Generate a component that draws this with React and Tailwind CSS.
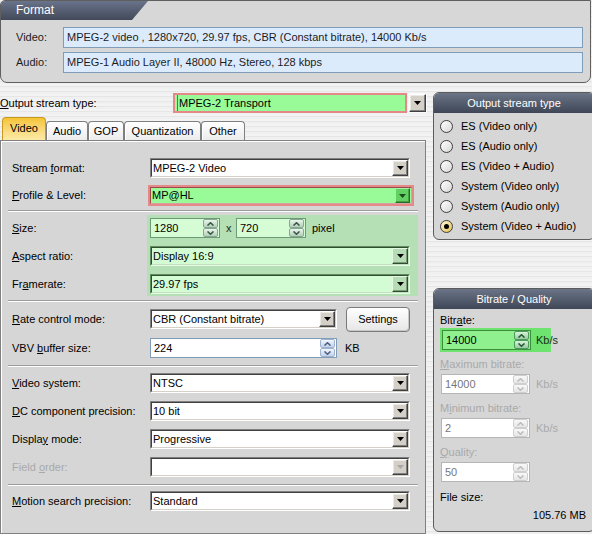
import React from 'react';

const Arrow = ({ color = '#000' }) => (
  <svg width="7" height="4" viewBox="0 0 7 4"><path d="M0 0H7L3.5 4Z" fill={color} /></svg>
);

const DROP = {
  gray: 'bg-[#d4d0c8] border-t-[#ffffff] border-l-[#ffffff] border-r-[#404040] border-b-[#404040] shadow-[inset_-1px_-1px_0_#808080,inset_1px_1px_0_#ebe9e4]',
  green: 'bg-[#b6dcb6] border-t-[#e4f8e4] border-l-[#e4f8e4] border-r-[#2f4f2f] border-b-[#2f4f2f] shadow-[inset_-1px_-1px_0_#7a9a7a]',
  lime: 'bg-[#62d062] border-t-[#a8f0a8] border-l-[#a8f0a8] border-r-[#2a6a2a] border-b-[#2a6a2a] shadow-[inset_-1px_-1px_0_#45a045]',
};

function DropBtn({ tone = 'gray', disabled, size = 'w-[16px] h-[16px]' }) {
  return (
    <div className={`${size} shrink-0 border flex items-center justify-center ${DROP[tone]}`}>
      <Arrow color={disabled ? '#a8a8a8' : tone === 'lime' ? '#1d4a1d' : '#000'} />
    </div>
  );
}

function Combo({ value, w = 'w-[260px]', tone = 'white', disabled }) {
  const outer = tone === 'green'
    ? 'border-t-[#5f8a5f] border-l-[#5f8a5f] border-b-[#e6fae6] border-r-[#e6fae6]'
    : 'border-t-[#808080] border-l-[#808080] border-b-[#ffffff] border-r-[#ffffff]';
  const inner = tone === 'green'
    ? 'border-t-[#2f4f2f] border-l-[#2f4f2f] border-b-[#c0e0c0] border-r-[#c0e0c0] bg-[#d4fcd4]'
    : 'border-t-[#404040] border-l-[#404040] border-b-[#d4d0c8] border-r-[#d4d0c8] bg-white';
  return (
    <div className={`${w} h-[20px] border shrink-0 ${outer}`}>
      <div className={`h-full border flex items-center ${inner}`}>
        <span className="flex-1 pl-[1px] whitespace-nowrap overflow-hidden">{value}</span>
        <DropBtn tone={tone === 'green' ? 'green' : 'gray'} disabled={disabled} />
      </div>
    </div>
  );
}

const SPIN_B = {
  blue: 'border-[#9fb2cf] from-[#f3f6fc] to-[#c3d1ea]',
  green: 'border-[#86a890] from-[#eaf6ec] to-[#b4cfba]',
  lime: 'border-[#4c9a5c] from-[#d8f4dc] to-[#98c8a0]',
  disabled: 'border-[#cfcfcf] from-[#f8f8f8] to-[#e6e6e6]',
};
const SPIN_C = { blue: '#4d6185', green: '#3b5a45', lime: '#2c5a36', disabled: '#bdbdbd' };

function SpinBtns({ tone }) {
  return (
    <div className="flex flex-col mr-[1px]">
      {[0, 1].map((i) => (
        <div key={i} className={`w-[15px] h-[9px] border rounded-[2px] bg-gradient-to-b flex items-center justify-center ${SPIN_B[tone]}`}>
          <svg width="7" height="4" viewBox="0 0 7 4">
            <path d={i === 0 ? 'M0.5 3.6L3.5 0.7L6.5 3.6' : 'M0.5 0.4L3.5 3.3L6.5 0.4'} fill="none" stroke={SPIN_C[tone]} strokeWidth="1.5" />
          </svg>
        </div>
      ))}
    </div>
  );
}

const SPIN_F = {
  blue: 'border-[#7f9db9] bg-white text-black',
  green: 'border-[#6f9a78] bg-[#d6fcd6] text-black',
  lime: 'border-[#3c8c3c] bg-[#8ef08e] text-black',
  disabled: 'border-[#b5b5b5] bg-white text-[#777777]',
};

function SpinField({ w, value, tone = 'blue' }) {
  return (
    <div className={`${w} h-[20px] border flex items-center shrink-0 ${SPIN_F[tone]}`}>
      <span className="flex-1 pl-[3px]">{value}</span>
      <SpinBtns tone={tone} />
    </div>
  );
}

const U = ({ children }) => <span className="underline underline-offset-[1px]">{children}</span>;

function Row({ label, children, className = '', labelCls = '' }) {
  return (
    <div className={`flex items-center h-[20px] ${className}`}>
      <div className={`w-[149px] pl-[11px] shrink-0 ${labelCls}`}>{label}</div>
      {children}
    </div>
  );
}

const Sep = ({ className = '' }) => (
  <div className={`ml-[7px] w-[410px] h-[2px] border-t border-t-[#9c9c9c] border-b border-b-[#ffffff] ${className}`} />
);

function Radio({ checked, label }) {
  return (
    <div className="h-[20px] flex items-center">
      <div className={`w-[13px] h-[13px] rounded-full border border-[#3f3f3f] flex items-center justify-center ${checked ? 'bg-gradient-to-br from-[#fff8d8] to-[#e6bf4c]' : 'bg-gradient-to-br from-[#ffffff] to-[#d8d8d8]'}`}>
        {checked && <div className="w-[5px] h-[5px] rounded-full bg-black" />}
      </div>
      <span className="ml-[8px]">{label}</span>
    </div>
  );
}

const Header = ({ children }) => (
  <div className="h-[20px] rounded-t-[5px] bg-gradient-to-b from-[#6b7587] to-[#3f4757] text-white text-center leading-[20px]">
    {children}
  </div>
);

function Tab({ label, w, selected }) {
  return selected ? (
    <div className={`${w} h-[23px] rounded-t-[4px] border border-b-0 border-[#c99a22] bg-gradient-to-b from-[#f5c431] to-[#fdeaa6] flex items-center justify-center pb-[1px]`}>
      {label}
    </div>
  ) : (
    <div className={`${w} h-[19px] rounded-t-[4px] border border-b-0 border-[#7f7f7f] shadow-[inset_1px_1px_0_#ffffff] bg-gradient-to-b from-[#ffffff] to-[#ececec] flex items-center justify-center`}>
      {label}
    </div>
  );
}

export default function App() {
  return (
    <div className="w-[592px] h-[534px] overflow-hidden text-[11px] leading-[13px] text-black font-['Liberation_Sans',Arial,sans-serif] bg-[#eeeeee] bg-[repeating-linear-gradient(0deg,#f0f0f0_0px,#f0f0f0_2px,#e6e6e6_2px,#e6e6e6_3px,#f3f3f3_3px,#f3f3f3_5px)]">
      {/* Format panel */}
      <div className="w-[591px] h-[83px] rounded-b-[7px] rounded-tl-[5px] border border-[#5f5f5f] bg-[#d7d7d7] overflow-hidden">
        <div className="w-[147px] h-[19px] bg-gradient-to-b from-[#69738a] to-[#424a5a] text-white text-[12px] leading-[19px] pl-[15px] [clip-path:polygon(0_0,100%_0,calc(100%_-_16px)_100%,0_100%)]">
          Format
        </div>
        <div className="mt-[7px] flex items-center pl-[15px] text-[#1c1c1c]">
          <div className="w-[47px]">Video:</div>
          <div className="w-[520px] h-[21px] border border-[#7f9db9] bg-[#dcebfc] pl-[3px] flex items-center">
            MPEG-2 video , 1280x720, 29.97 fps, CBR (Constant bitrate), 14000 Kb/s
          </div>
        </div>
        <div className="mt-[4px] flex items-center pl-[15px] text-[#1c1c1c]">
          <div className="w-[47px]">Audio:</div>
          <div className="w-[520px] h-[21px] border border-[#7f9db9] bg-[#dcebfc] pl-[3px] flex items-center">
            MPEG-1 Audio Layer II, 48000 Hz, Stereo, 128 kbps
          </div>
        </div>
      </div>

      <div className="flex">
        {/* Left column */}
        <div className="w-[427px] shrink-0">
          <div className="mt-[10px] h-[20px] flex items-center">
            <div className="w-[173px]"><U>O</U>utput stream type:</div>
            <div className="w-[254px] h-[20px] flex">
              <div className="flex-1 border-2 border-[#e58888] bg-[#98fb98] flex items-center pl-[2px]">
                <span className="border-l border-[#b05050] h-full flex items-center pl-[1px]">MPEG-2 Transport</span>
              </div>
              <div className="ml-[1px] border border-[#fafafa] flex">
                <DropBtn tone="gray" size="w-[17px] h-[18px]" />
              </div>
            </div>
          </div>

          {/* Tabs */}
          <div className="mt-[4px] flex items-end pl-[2px] h-[23px]">
            <Tab label="Video" w="w-[44px]" selected />
            <Tab label="Audio" w="w-[42px]" />
            <Tab label="GOP" w="w-[36px]" />
            <Tab label="Quantization" w="w-[77px]" />
            <Tab label="Other" w="w-[44px]" />
          </div>

          {/* Tab panel */}
          <div className="w-[426px] h-[394px] border border-[#808080] bg-[#d6d6d6] shadow-[inset_1px_1px_0_#ffffff]">
            <Row label={<>Stream <U>f</U>ormat:</>} className="mt-[17px]">
              <Combo value="MPEG-2 Video" />
            </Row>
            <div className="mt-[7px] flex items-center h-[21px]">
              <div className="w-[147px] pl-[11px] shrink-0"><U>P</U>rofile &amp; Level:</div>
              <div className="w-[266px] h-[21px] border-2 border-[#e58888] flex">
                <div className="flex-1 h-full border border-t-[#9a4a4a] border-l-[#9a4a4a] border-b-[#d8a0a0] border-r-[#d8a0a0] bg-[#98fb98] flex items-center pr-[1px]">
                  <span className="flex-1 pl-[1px]">MP@HL</span>
                  <DropBtn tone="lime" size="w-[15px] h-[15px]" />
                </div>
              </div>
            </div>
            <Sep className="mt-[4px]" />

            {/* Green group */}
            <div className="mt-[3px] flex">
              <div className="w-[146px] shrink-0 pl-[11px] pt-[3px]">
                <div className="h-[20px] flex items-center"><U>S</U>ize:</div>
                <div className="mt-[8px] h-[20px] flex items-center"><U>A</U>spect ratio:</div>
                <div className="mt-[8px] h-[20px] flex items-center">Fr<U>a</U>merate:</div>
              </div>
              <div className="w-[271px] bg-[#b5dfb5] pl-[3px] pt-[3px] pb-[2px]">
                <div className="h-[20px] flex items-center">
                  <SpinField w="w-[70px]" value="1280" tone="green" />
                  <span className="ml-[6px] w-[10px] text-[#1a2a1a]">x</span>
                  <SpinField w="w-[70px]" value="720" tone="green" />
                  <span className="ml-[6px]">pixel</span>
                </div>
                <div className="mt-[8px]"><Combo value="Display 16:9" tone="green" /></div>
                <div className="mt-[8px]"><Combo value="29.97 fps" tone="green" /></div>
              </div>
            </div>
            <Sep className="mt-[4px]" />

            <div className="mt-[4px] flex items-center h-[26px]">
              <div className="w-[149px] pl-[11px] shrink-0"><U>R</U>ate control mode:</div>
              <Combo value="CBR (Constant bitrate)" w="w-[187px]" />
              <div className="ml-[9px] w-[64px] h-[25px] rounded-[4px] border border-[#7a7a7a] bg-gradient-to-b from-[#ffffff] to-[#e6e6e6] shadow-[inset_-1px_-1px_0_#c8c8c8] flex items-center justify-center">
                Settings
              </div>
            </div>
            <Row label={<>VBV <U>b</U>uffer size:</>} className="mt-[6px]">
              <SpinField w="w-[187px]" value="224" tone="blue" />
              <span className="ml-[8px]">KB</span>
            </Row>
            <Sep className="mt-[7px]" />

            <Row label={<><U>V</U>ideo system:</>} className="mt-[6px]">
              <Combo value="NTSC" />
            </Row>
            <Row label={<><U>D</U>C component precision:</>} className="mt-[8px]">
              <Combo value="10 bit" />
            </Row>
            <Row label={<>Displa<U>y</U> mode:</>} className="mt-[8px]">
              <Combo value="Progressive" />
            </Row>
            <Row label={<>Field <U>o</U>rder:</>} className="mt-[8px]" labelCls="text-[#a9a9a9]">
              <Combo value="" disabled />
            </Row>
            <Sep className="mt-[7px]" />
            <Row label={<><U>M</U>otion search precision:</>} className="mt-[5px]">
              <Combo value="Standard" />
            </Row>
          </div>
        </div>

        {/* Right column */}
        <div className="ml-[6px] w-[162px] shrink-0">
          <div className="mt-[9px] h-[148px] rounded-[6px] border border-[#5c5c5c] bg-[#d6d6d6] overflow-hidden">
            <Header>Output stream type</Header>
            <div className="pt-[3px] pl-[6px]">
              <Radio label="ES (Video only)" />
              <Radio label="ES (Audio only)" />
              <Radio label="ES (Video + Audio)" />
              <Radio label="System (Video only)" />
              <Radio label="System (Audio only)" />
              <Radio label="System (Video + Audio)" checked />
            </div>
          </div>

          <div className="mt-[48px] h-[244px] rounded-[6px] border border-[#5c5c5c] bg-[#d6d6d6] overflow-hidden">
            <Header>Bitrate / Quality</Header>
            <div className="pl-[6px]">
              <div className="mt-[5px] h-[13px]">Bitr<U>a</U>te:</div>
              <div className="mt-[1px] w-[111px] h-[24px] bg-[#6fe36f] flex items-center pl-[2px] whitespace-nowrap">
                <SpinField w="w-[89px]" value="14000" tone="lime" />
                <span className="ml-[5px] text-[#143014]">Kb/s</span>
              </div>

              <div className="mt-[6px] h-[13px] text-[#a9a9a9]"><U>M</U>aximum bitrate:</div>
              <div className="mt-[3px] ml-[1px] flex items-center">
                <SpinField w="w-[89px]" value="14000" tone="disabled" />
                <span className="ml-[6px] text-[#a9a9a9]">Kb/s</span>
              </div>

              <div className="mt-[8px] h-[13px] text-[#a9a9a9]">M<U>i</U>nimum bitrate:</div>
              <div className="mt-[3px] ml-[1px] flex items-center">
                <SpinField w="w-[89px]" value="2" tone="disabled" />
                <span className="ml-[6px] text-[#a9a9a9]">Kb/s</span>
              </div>

              <div className="mt-[8px] h-[13px] text-[#a9a9a9]"><U>Q</U>uality:</div>
              <div className="mt-[3px] ml-[1px] flex items-center">
                <SpinField w="w-[89px]" value="50" tone="disabled" />
              </div>

              <div className="mt-[9px] h-[13px]">File size:</div>
            </div>
            <div className="mt-[5px] w-[152px] h-[13px] text-right">105.76 MB</div>
          </div>
        </div>
      </div>
    </div>
  );
}
